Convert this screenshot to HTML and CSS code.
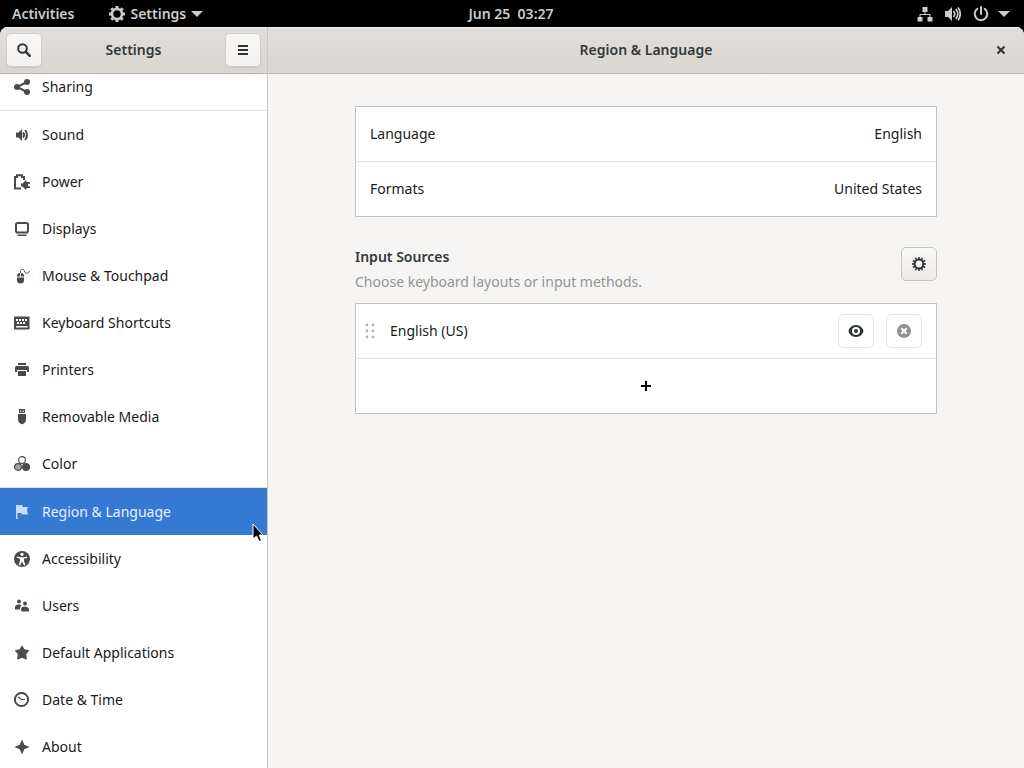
FILE: index.html
```html
<!DOCTYPE html>
<html lang="en">
<head>
    <meta charset="UTF-8">
    <meta name="viewport" content="width=device-width, initial-scale=1.0">
    <title>Settings - Region &amp; Language</title>
    <link rel="stylesheet" href="styles.css">
</head>
<body>
    <div class="top-bar">
        <div class="top-left">
            <button class="top-button">Activities</button>
            <button class="top-button app-menu">
                <svg class="icon" viewBox="0 0 16 16"><circle cx="8" cy="8" r="5" fill="none" stroke="currentColor" stroke-width="2.600"/><path d="M8 0v3M8 13v3M0 8h3M13 8h3M2.300 2.300l2.200 2.200M11.500 11.500l2.200 2.200M2.300 13.700l2.200-2.200M11.500 4.500l2.200-2.200" stroke="currentColor" stroke-width="3"/></svg>
                <span>Settings</span>
                <svg class="arrow" viewBox="0 0 12 6"><path d="M0 0h12L6 6z"/></svg>
            </button>
        </div>
        <button class="top-button clock">Jun 25&nbsp; 03:27</button>
        <button class="top-button status" aria-label="System menu">
            <span class="status-icons">
                <svg class="icon" viewBox="0 0 16 16"><path d="M5.500 1h5v5h-5zM.500 11h5v4.500h-5zM10.500 11h5v4.500h-5zM7.500 6h1v2h5v3h-1V9h-9v2h-1V8h5z"/></svg>
                <svg class="icon" viewBox="0 0 16 16"><path d="M0 5h3l4-4v14l-4-4H0z"/><path d="M8.500 5q2.500 3 0 6M10.800 3q4 5 0 10M13 1.500q4.500 6.500 0 13" fill="none" stroke="currentColor" stroke-width="1.700"/></svg>
                <svg class="icon" viewBox="0 0 16 16"><path d="M4.300 2.800a6.300 6.300 0 1 0 7.400 0M8 1v7" fill="none" stroke="currentColor" stroke-width="2" stroke-linecap="round"/></svg>
            </span>
            <svg class="arrow" viewBox="0 0 12 6"><path d="M0 0h12L6 6z"/></svg>
        </button>
    </div>

    <div class="window">
        <header class="header-bar">
            <div class="header-side">
                <button class="header-button" aria-label="Search">
                    <svg class="icon" viewBox="0 0 16 16"><circle cx="6.500" cy="6.500" r="4.300" fill="none" stroke="currentColor" stroke-width="2"/><path d="M9.800 9.800l4 4" stroke="currentColor" stroke-width="2.400" stroke-linecap="round"/></svg>
                </button>
                <h2>Settings</h2>
                <button class="header-button" aria-label="Menu">
                    <svg class="icon" viewBox="0 0 16 16"><path d="M3 3h10v2H3zM3 7h10v2H3zM3 11h10v2H3z"/></svg>
                </button>
            </div>
            <div class="header-main">
                <h1>Region &amp; Language</h1>
                <button class="close-button" aria-label="Close">
                    <svg class="icon" viewBox="0 0 16 16"><path d="M4.500 4.500l7 7M11.500 4.500l-7 7" stroke="currentColor" stroke-width="2"/></svg>
                </button>
            </div>
        </header>

        <div class="content">
            <nav class="sidebar">
                <ul class="panel-list">
                    <li class="group-end"><a href="#sharing">
                        <svg class="icon" viewBox="0 0 16 16"><circle cx="3" cy="8" r="3"/><circle cx="13" cy="3" r="3"/><circle cx="13" cy="13" r="3"/><path d="M13 3L3 8l10 5" fill="none" stroke="currentColor" stroke-width="2"/></svg>
                        Sharing</a></li>
                    <li><a href="#sound">
                        <svg class="icon" viewBox="0 0 16 16"><path d="M2 5.500h2.500L8 2v12l-3.500-3.500H2z"/><path d="M9 5.500q2.200 2.500 0 5M11.200 3q3.500 5 0 10" fill="none" stroke="currentColor" stroke-width="2"/></svg>
                        Sound</a></li>
                    <li><a href="#power">
                        <svg class="icon" viewBox="0 0 16 16"><path d="M7 14.500H1V3h2V1.200h5V3h2v3" fill="none" stroke="currentColor" stroke-width="2"/><path d="M7 9.500h1.500l3-3h1V8H16v1.800h-2v2.400h2V14h-3.500v1.500h-1l-3-3H7z"/></svg>
                        Power</a></li>
                    <li><a href="#displays">
                        <svg class="icon" viewBox="0 0 16 16"><rect x="2" y="2" width="12" height="9.500" rx="1.800" fill="none" stroke="currentColor" stroke-width="2"/><path d="M3.500 13.500h9V15h-9z"/></svg>
                        Displays</a></li>
                    <li><a href="#mouse">
                        <svg class="icon" viewBox="0 0 16 16"><path d="M3 8c0-2 1-3 3-3v3.500H3zM7 5c2 0 3 1 3 3v.500H7zM3 9.500h7v2.500a3.500 3.500 0 0 1-7 0z"/><path d="M6.500 5V3.500C6.500.700 10 .700 10.500 3c.500 2.500 3.500 3.500 5 0" fill="none" stroke="currentColor"/></svg>
                        Mouse &amp; Touchpad</a></li>
                    <li><a href="#keyboard">
                        <svg class="icon" viewBox="0 0 16 16"><path fill-rule="evenodd" d="M0 1.500h15.500v13H0zM2 4v2h2V4zM5 4v2h2V4zM8 4v2h2V4zM11 4v2h2V4zM3 7v2h2V7zM6 7v2h2V7zM9 7v2h2V7zM2 11v1.500h11.500V11z"/></svg>
                        Keyboard Shortcuts</a></li>
                    <li><a href="#printers">
                        <svg class="icon" viewBox="0 0 16 16"><path d="M4 1h8v2H4zM2.500 4h11Q15 4 15 5.500V10h-2V8H3v2H1V5.500Q1 4 2.500 4zM4 9h8v5H4z"/></svg>
                        Printers</a></li>
                    <li><a href="#media">
                        <svg class="icon" viewBox="0 0 16 16"><path fill-rule="evenodd" d="M5 0h6v4H5zM6.200 1.500v1.300h1.200V1.500zM8.700 1.500v1.300h1.200V1.500zM4 5h8v6q0 2-2.200 3.500-1.800 1.300-3.600 0Q4 13 4 11z"/></svg>
                        Removable Media</a></li>
                    <li><a href="#color">
                        <svg class="icon" viewBox="0 0 16 16"><circle cx="8" cy="4" r="3.400" fill="none" stroke="currentColor" stroke-width="1.100"/><circle cx="4" cy="11" r="3.400" fill="#a0a0a0" stroke="currentColor" stroke-width="1.100"/><circle cx="12" cy="11" r="4"/></svg>
                        Color</a></li>
                    <li class="group-start"><a href="#region" class="selected" aria-current="page">
                        <svg class="icon" viewBox="0 0 16 16"><path d="M2 1h1.500v14H2zM3.500 1H8.500v2H14l-1 3.500 1 4H7.500V9h-4z"/></svg>
                        Region &amp; Language</a></li>
                    <li><a href="#accessibility">
                        <svg class="icon" viewBox="0 0 16 16"><circle cx="8" cy="8" r="8"/><circle cx="8" cy="3.300" r="1.600" fill="#fff"/><path d="M3 5.500l3.500.800h3l3.500-.800.300 1.300-3.300 1V10l1.300 4-1.300.400L8 10.500l-2 3.900-1.300-.400L6 10V7.800l-3.300-1z" fill="#fff"/></svg>
                        Accessibility</a></li>
                    <li><a href="#users">
                        <svg class="icon" viewBox="0 0 16 16"><circle cx="5" cy="3.500" r="2"/><circle cx="11" cy="5.500" r="2"/><path d="M1 9.500Q1 6.500 5 6.500q2 0 2.500 1Q6 8.500 6 11.500H1zM7 11.500q0-3 3.500-3 4.500 0 4.500 3.500v1.500H8q-1 0-1-2z"/></svg>
                        Users</a></li>
                    <li><a href="#applications">
                        <svg class="icon" viewBox="0 0 16 16"><path d="M8 1l2.200 3.800 4.500.800-3 3.500.700 5L8 12.300l-4.400 1.800.700-5-3-3.500 4.500-.800z" stroke="currentColor" stroke-linejoin="round"/></svg>
                        Default Applications</a></li>
                    <li><a href="#datetime">
                        <svg class="icon" viewBox="0 0 16 16"><circle cx="7.500" cy="7.500" r="6.600" fill="none" stroke="currentColor" stroke-width="2"/><path d="M4 5l3.500 2.500H11" fill="none" stroke="currentColor" stroke-width="1.200"/></svg>
                        Date &amp; Time</a></li>
                    <li><a href="#about">
                        <svg class="icon" viewBox="0 0 16 16"><path d="M8 .500l2.300 5.200L15.500 8l-5.200 2.300L8 15.500l-2.300-5.200L.500 8l5.200-2.300z"/></svg>
                        About</a></li>
                </ul>
            </nav>

            <main class="panel">
                <div class="panel-inner">
                    <div class="card">
                        <button class="row"><span>Language</span><span>English</span></button>
                        <button class="row"><span>Formats</span><span>United States</span></button>
                    </div>

                    <div class="section-head">
                        <div>
                            <h3>Input Sources</h3>
                            <p>Choose keyboard layouts or input methods.</p>
                        </div>
                        <button class="tool-button raised" aria-label="Input source options">
                            <svg class="icon" viewBox="0 0 16 16"><circle cx="8" cy="8" r="4.400" fill="none" stroke="currentColor" stroke-width="2"/><path d="M8 1v3M8 12v3M1 8h3M12 8h3M4.500 1.900l1.500 2.600M10 11.500l1.500 2.600M1.900 4.500l2.600 1.500M11.500 10l2.600 1.500M1.900 11.500L4.500 10M11.500 6l2.600-1.500M4.500 14.100L6 11.500M10 4.500l1.500-2.600" stroke="currentColor" stroke-width="1.600"/></svg>
                        </button>
                    </div>

                    <div class="card">
                        <div class="row source">
                            <svg class="handle" viewBox="0 0 10 16"><circle cx="2" cy="2" r="1.400"/><circle cx="8" cy="2" r="1.400"/><circle cx="2" cy="8" r="1.400"/><circle cx="8" cy="8" r="1.400"/><circle cx="2" cy="14" r="1.400"/><circle cx="8" cy="14" r="1.400"/></svg>
                            <span class="source-name">English (US)</span>
                            <button class="tool-button" aria-label="Show layout">
                                <svg class="icon" viewBox="0 0 16 16"><path fill-rule="evenodd" d="M8 2c4 0 7 3 7.500 6-.500 3-3.500 6-7.500 6S1 11 .500 8C1 5 4 2 8 2zm0 2a4 4 0 1 0 0 8 4 4 0 0 0 0-8z"/><circle cx="8" cy="8" r="2"/></svg>
                            </button>
                            <button class="tool-button" aria-label="Remove" disabled>
                                <svg class="icon" viewBox="0 0 16 16"><circle cx="8" cy="8" r="7"/><path d="M5.300 5.300l5.400 5.400M10.700 5.300l-5.400 5.400" stroke="#fff" stroke-width="2"/></svg>
                            </button>
                        </div>
                        <button class="row add" aria-label="Add input source">
                            <svg class="icon" viewBox="0 0 16 16"><path d="M7 3h2v4h4v2H9v4H7V9H3V7h4z"/></svg>
                        </button>
                    </div>
                </div>
            </main>
        </div>
    </div>

    <svg class="pointer" viewBox="0 0 12 20"><path d="M1 1v15l3.500-3 2.500 5.500 2.500-1L7.200 12H11z" fill="#000" stroke="#fff"/></svg>
</body>
</html>
```
FILE: styles.css
```css
* {
    box-sizing: border-box;
}

body {
    margin: 0;
    height: 100vh;
    display: flex;
    flex-direction: column;
    overflow: hidden;
    background: #000;
    color: #1a1a1a;
    font-family: "Noto Sans", sans-serif;
    font-size: 14px;
    line-height: 20px;
}

h1, h2, h3, p {
    margin: 0;
    font-size: 14px;
}

h1, h2, h3 {
    font-weight: 600;
    color: #33383a;
}

button {
    font: inherit;
    color: inherit;
    background: none;
    border: none;
    padding: 0;
}

svg {
    display: block;
    flex: none;
    fill: currentColor;
}

.icon {
    width: 16px;
    height: 16px;
}

/* Top bar */
.top-bar {
    flex: none;
    height: 27px;
    display: grid;
    grid-template-columns: 1fr auto 1fr;
    align-items: center;
    padding: 0 14px 0 12px;
    color: #ccc;
    font-weight: 600;
}

.top-left,
.top-button {
    display: flex;
    align-items: center;
}

.top-left {
    gap: 35px;
}

.app-menu {
    gap: 5px;
}

.status {
    justify-self: end;
    gap: 9px;
}

.status-icons {
    display: flex;
    gap: 12px;
}

.arrow {
    width: 12px;
    height: 6px;
}

/* Window */
.window {
    flex: 1;
    min-height: 0;
    display: flex;
    flex-direction: column;
    border-radius: 8px 8px 0 0;
    overflow: hidden;
    background: #f6f5f4;
}

.header-bar {
    flex: none;
    height: 47px;
    display: flex;
    background: linear-gradient(#e1dedb, #dad6d2);
    border-bottom: 1px solid #bfb8b1;
    box-shadow: inset 0 1px #efedec;
}

.header-side {
    width: 268px;
    display: flex;
    align-items: center;
    justify-content: space-between;
    padding: 0 6px;
    border-right: 1px solid #cdc7c2;
}

.header-main {
    flex: 1;
    display: grid;
    grid-template-columns: 1fr auto 1fr;
    align-items: center;
    padding: 0 15px;
}

.header-main h1 {
    grid-column: 2;
}

.close-button {
    justify-self: end;
    color: #2e3436;
}

.header-button,
.tool-button {
    width: 36px;
    height: 34px;
    display: flex;
    align-items: center;
    justify-content: center;
    border: 1px solid #e6e5e4;
    border-radius: 5px;
    color: #2e3436;
}

.header-button {
    background: linear-gradient(#f8f7f6, #f3f2f0);
    border-color: #d2cdc8;
    box-shadow: 0 1px 1px rgba(0, 0, 0, 0.08);
}

.content {
    flex: 1;
    min-height: 0;
    display: flex;
}

/* Sidebar */
.sidebar {
    width: 268px;
    flex: none;
    overflow: hidden;
    background: #fff;
    border-right: 1px solid #cdc7c2;
}

/* the list is scrolled down a little */
.panel-list {
    list-style: none;
    margin: -11px 0 0;
    padding: 0;
}

.panel-list a {
    display: flex;
    align-items: center;
    gap: 12px;
    height: 47px;
    padding: 0 14px;
    color: #1a1a1a;
    text-decoration: none;
}

.panel-list .icon {
    color: #4a4a4a;
}

.group-end {
    border-bottom: 1px solid #e6e5e4;
}

.group-start {
    border-top: 1px solid #e6e5e4;
}

.panel-list .selected {
    background: #3579d3;
    color: #e8f2ff;
}

.panel-list .selected .icon {
    color: #c5dcf7;
}

/* Panel */
.panel {
    flex: 1;
    padding: 32px 24px;
}

.panel-inner {
    max-width: 582px;
    margin: 0 auto;
}

.card {
    background: #fff;
    border: 1px solid #c5c1bd;
}

.row {
    width: 100%;
    height: 54px;
    display: flex;
    align-items: center;
    justify-content: space-between;
    padding: 0 14px;
}

.row + .row {
    height: 55px;
    border-top: 1px solid #e6e5e4;
}

.row.add {
    justify-content: center;
    color: #000;
}

.section-head {
    display: flex;
    align-items: flex-start;
    justify-content: space-between;
    padding: 30px 0 11px;
}

.section-head p {
    margin-top: 5px;
    color: #929595;
}

.raised {
    background: linear-gradient(#f8f8f7, #edebe9);
    border-color: #c9c4bf;
}

.source {
    gap: 12px;
    padding-left: 9px;
}

.source-name {
    flex: 1;
    margin-left: 3px;
}

.handle {
    width: 10px;
    height: 16px;
    color: #b2b2b2;
}

.tool-button:disabled {
    color: #929292;
}

/* Mouse pointer */
.pointer {
    position: absolute;
    left: 252px;
    top: 523px;
    width: 12px;
    height: 20px;
}
```
